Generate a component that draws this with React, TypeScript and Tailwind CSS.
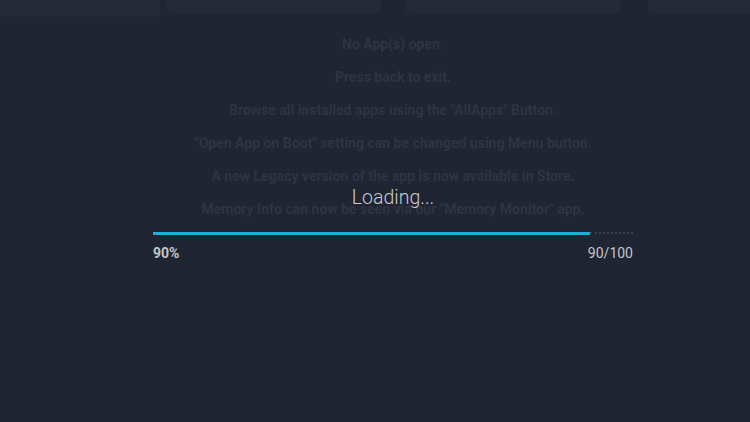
export default function App() {
  const tips = [
    "No App(s) open.",
    "Press back to exit.",
    'Browse all installed apps using the "AllApps" Button.',
    '"Open App on Boot" setting can be changed using Menu button.',
    "A new Legacy version of the app is now available in Store.",
    'Memory Info can now be seen via our "Memory Monitor" app.',
  ];
  const progress = 90;

  return (
    <div className="w-[750px] h-[422px] overflow-hidden bg-[#1f2532] relative font-['Roboto',sans-serif]">
      {/* faded app tiles along the top */}
      <div className="flex h-[17px]">
        <div className="w-[160px] h-[17px] bg-[#242935]" />
        <div className="w-[214px] h-[13px] ml-[7px] bg-[#262a36] rounded-b-sm" />
        <div className="w-[214px] h-[13px] ml-[25px] bg-[#262a36] rounded-b-sm" />
        <div className="w-[102px] h-[13px] ml-[28px] bg-[#262a36] rounded-bl-sm" />
      </div>

      <div className="ml-[153px] w-[480px] pt-[18px]">
        <div className="flex flex-col items-center text-[14px] font-bold text-[#2f3442] leading-[19px] gap-[14px]">
          {tips.map((t) => (
            <p key={t}>{t}</p>
          ))}
        </div>

        <div className="absolute left-[153px] top-[183px] w-[480px] text-center text-[19.5px] font-light text-[#c9cbcf]">
          Loading...
        </div>

        <div className="mt-[12px] flex items-center h-[4px]">
          <div
            className="h-[3px] bg-[#17b3d6]"
            style={{ width: `${(progress / 90) * 437}px` }}
          />
          <div className="flex-1 border-t-2 border-dotted border-[#3b404b]" />
        </div>
        <div className="flex justify-between mt-[10px] text-[14px] text-[#c4c6ca] leading-[16px]">
          <span className="font-bold">{progress}%</span>
          <span>{progress}/100</span>
        </div>
      </div>
    </div>
  );
}
